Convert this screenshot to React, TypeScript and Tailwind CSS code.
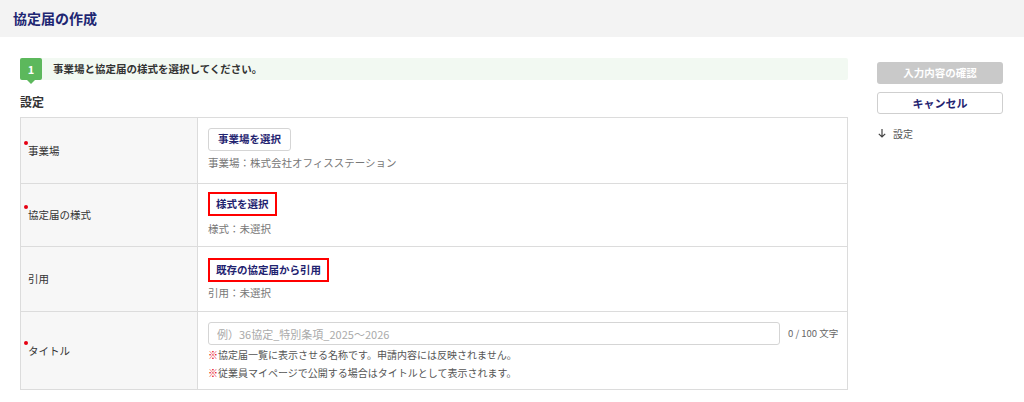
import React from 'react';

const font = { fontFamily: '"Noto Sans CJK JP", "Noto Sans", sans-serif' };

function Label({ text, required }: { text: string; required?: boolean }) {
    return (
        <td className="w-[177px] bg-[#f7f7f7] border border-[#dcdcdc] pl-[7px] align-middle text-[10.5px] text-[#333]">
            <span className="relative">
                {required && <span className="absolute -left-[4px] -top-[2px] w-[4px] h-[4px] rounded-full bg-[#e60012]" />}
                <span>{text}</span>
            </span>
        </td>
    );
}

function SelectButton({ text, highlight }: { text: string; highlight?: boolean }) {
    return (
        <button
            className={`block bg-white text-[10.5px] font-bold text-[#1f2370] leading-none ${highlight ? 'h-[24px] px-[6px] border-2 border-[#ff0000]' : 'h-[23px] px-[9px] rounded-[3px] border border-[#d5d5d5]'}`}
        >
            {text}
        </button>
    );
}

export default function App() {
    return (
        <div className="w-[1024px] h-[402px] bg-white overflow-hidden" style={font}>
            <div className="h-[37px] bg-[#f3f3f3] flex items-center pl-[13px]">
                <h1 className="text-[14px] font-bold text-[#1d2672]">協定届の作成</h1>
            </div>

            <div className="flex pt-[21px] pl-[20px]">
                <div className="w-[828px]">
                    {/* step banner */}
                    <div className="h-[22px] bg-[#f2f9f2] rounded-[2px] flex items-center">
                        <div className="relative w-[22px] h-[22px] bg-[#5cb85c] rounded-[2px] flex items-center justify-center text-white text-[11px] font-bold">
                            1
                            <span className="absolute left-[7px] -bottom-[4px] w-0 h-0 border-l-[4px] border-r-[4px] border-t-[4px] border-l-transparent border-r-transparent border-t-[#5cb85c]" />
                        </div>
                        <span className="ml-[11px] text-[10.5px] font-bold text-[#333]">事業場と協定届の様式を選択してください。</span>
                    </div>

                    <h2 className="mt-[14px] text-[12px] font-bold text-[#333] leading-[16px]">設定</h2>

                    <table className="mt-[7px] w-full border-collapse border border-[#dcdcdc]">
                        <tbody>
                            <tr className="h-[66px]">
                                <Label text="事業場" required />
                                <td className="border border-[#dcdcdc] pl-[10px] pt-[10px] pb-[8px] align-top">
                                    <SelectButton text="事業場を選択" />
                                    <p className="mt-[4px] text-[10.5px] text-[#777] leading-[16px]">事業場：株式会社オフィスステーション</p>
                                </td>
                            </tr>
                            <tr className="h-[63px]">
                                <Label text="協定届の様式" required />
                                <td className="border border-[#dcdcdc] pl-[10px] pt-[8px] pb-[6px] align-top">
                                    <SelectButton text="様式を選択" highlight />
                                    <p className="mt-[5px] text-[10.5px] text-[#777] leading-[16px]">様式：未選択</p>
                                </td>
                            </tr>
                            <tr className="h-[65px]">
                                <Label text="引用" />
                                <td className="border border-[#dcdcdc] pl-[10px] pt-[11px] pb-[6px] align-top">
                                    <SelectButton text="既存の協定届から引用" highlight />
                                    <p className="mt-[3px] text-[10.5px] text-[#777] leading-[16px]">引用：未選択</p>
                                </td>
                            </tr>
                            <tr className="h-[78px]">
                                <Label text="タイトル" required />
                                <td className="border border-[#dcdcdc] pl-[10px] pt-[10px] pb-[5px] align-top">
                                    <div className="flex items-center">
                                        <input
                                            className="w-[572px] h-[23px] border border-[#d5d5d5] rounded-[3px] px-[8px] text-[11px] placeholder-[#aaa] outline-none"
                                            placeholder="例）36協定_特別条項_2025～2026"
                                        />
                                        <span className="ml-[8px] text-[9.5px] text-[#666]">0 / 100 文字</span>
                                    </div>
                                    <p className="mt-[1px] text-[10px] text-[#555] leading-[18px]"><span className="text-[#e60012]">※</span>協定届一覧に表示させる名称です。申請内容には反映されません。</p>
                                    <p className="text-[10px] text-[#555] leading-[18px]"><span className="text-[#e60012]">※</span>従業員マイページで公開する場合はタイトルとして表示されます。</p>
                                </td>
                            </tr>
                        </tbody>
                    </table>
                </div>

                {/* side */}
                <div className="ml-[29px] w-[126px]">
                    <button className="w-full h-[22px] rounded-[3px] bg-[#c9c9c9] text-white text-[10.5px] font-bold">入力内容の確認</button>
                    <button className="mt-[8px] w-full h-[22px] rounded-[3px] border border-[#cfcfcf] bg-white text-[#1f2370] text-[11px] font-bold">キャンセル</button>
                    <div className="mt-[12px] flex items-center text-[10px] text-[#555]">
                        <svg width="10" height="10" viewBox="0 0 10 10" className="mr-[6px]" fill="none" stroke="#444" strokeWidth="1.2">
                            <path d="M5 1v8M1.8 5.8L5 9l3.2-3.2" />
                        </svg>
                        設定
                    </div>
                </div>
            </div>
        </div>
    );
}
